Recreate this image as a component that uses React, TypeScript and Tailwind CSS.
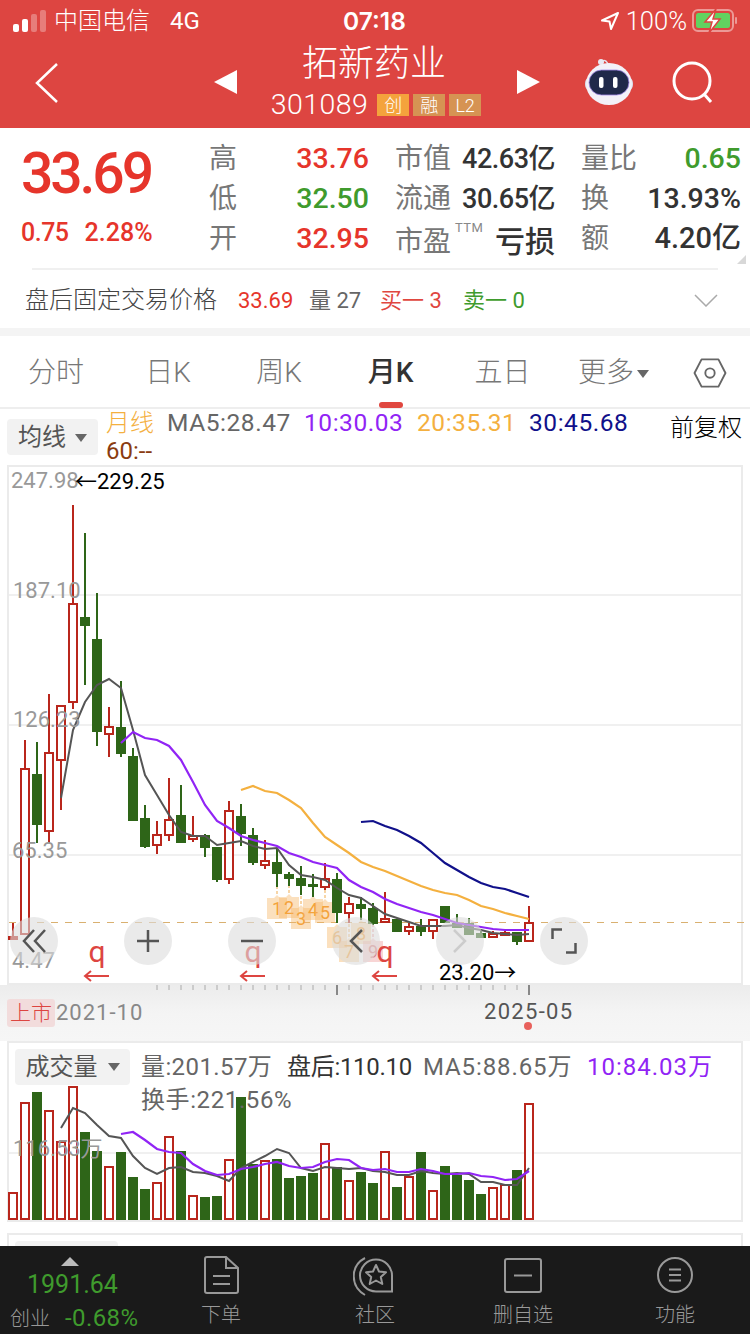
// [high, top, bottom, low, isRed] — page y coordinates, one candle every 12px from x=13
const CANDLES: [number, number, number, number, boolean][] = [
  [923, 937, 939, 940, true], [740, 769, 934, 934, true], [742, 774, 825, 843, false], [694, 753, 831, 843, true],
  [706, 706, 760, 810, true], [505, 604, 702, 709, true], [533, 617, 626, 685, false], [593, 639, 732, 746, false],
  [707, 727, 734, 757, true], [681, 727, 754, 757, false], [748, 756, 821, 821, false], [805, 818, 847, 848, false],
  [821, 835, 845, 854, true], [778, 820, 835, 841, true], [785, 815, 843, 843, false], [816, 836, 839, 842, true],
  [834, 835, 848, 857, false], [847, 847, 880, 882, false], [801, 811, 879, 884, true], [804, 816, 834, 846, false],
  [828, 835, 863, 865, false], [840, 861, 865, 869, true], [848, 862, 874, 887, false], [872, 874, 879, 886, false],
  [866, 878, 886, 895, false], [874, 884, 887, 897, false], [863, 879, 887, 890, true], [873, 879, 913, 923, false],
  [897, 904, 913, 923, true], [897, 904, 909, 920, false], [903, 908, 924, 925, false], [892, 919, 922, 922, true],
  [919, 919, 932, 932, false], [923, 927, 931, 935, true], [919, 926, 932, 936, false], [919, 920, 931, 939, true],
  [906, 906, 923, 923, false], [914, 923, 928, 928, false], [918, 923, 935, 935, false], [931, 933, 938, 938, false],
  [931, 934, 937, 937, true], [931, 933, 935, 935, true], [932, 932, 942, 945, false], [906, 923, 941, 941, true],
];

const MA5 = [798, 730, 702, 685, 679, 688, 730, 775, 795, 815, 832, 836, 836, 845, 843, 841, 846, 849, 848, 865, 875, 877, 880, 888, 895, 898, 906, 914, 918, 922, 926, 926, 926, 925, 928, 930, 933, 934, 935, 934];
const MA10 = [743, 732, 738, 740, 746, 760, 782, 805, 821, 828, 836, 840, 843, 846, 853, 857, 862, 865, 868, 880, 887, 892, 899, 904, 908, 912, 915, 919, 923, 925, 927, 929, 930, 930, 930];
const MA20 = [790, 786, 791, 793, 800, 808, 823, 837, 845, 853, 862, 867, 871, 876, 881, 886, 890, 893, 895, 900, 906, 909, 913, 916, 919];
const MA30 = [822, 821, 826, 830, 836, 843, 853, 863, 870, 877, 883, 887, 889, 893, 897];

const VOLS = [1193, 1103, 1092, 1111, 1142, 1087, 1132, 1151, 1167, 1152, 1177, 1189, 1183, 1137, 1151, 1196, 1197, 1196, 1160, 1097, 1164, 1161, 1159, 1178, 1176, 1173, 1144, 1167, 1181, 1172, 1183, 1152, 1187, 1177, 1152, 1191, 1166, 1175, 1180, 1194, 1188, 1185, 1170, 1104];
const VOL_MA5 = [1128, 1108, 1113, 1125, 1136, 1138, 1156, 1168, 1174, 1168, 1167, 1172, 1173, 1176, 1181, 1168, 1162, 1156, 1149, 1153, 1168, 1171, 1167, 1168, 1169, 1168, 1171, 1172, 1175, 1175, 1171, 1173, 1174, 1173, 1174, 1182, 1182, 1185, 1185, 1168];
const VOL_MA10 = [1134, 1132, 1140, 1149, 1152, 1153, 1164, 1171, 1175, 1174, 1169, 1167, 1164, 1162, 1166, 1168, 1167, 1162, 1159, 1160, 1168, 1170, 1169, 1172, 1172, 1169, 1171, 1174, 1174, 1173, 1176, 1177, 1180, 1179, 1171];

const MARKERS = [
  { n: 1, x: 277, y: 895, pink: false }, { n: 2, x: 289, y: 894, pink: false }, { n: 3, x: 301, y: 905, pink: false },
  { n: 4, x: 313, y: 896, pink: false }, { n: 5, x: 325, y: 899, pink: false }, { n: 6, x: 337, y: 924, pink: false },
  { n: 7, x: 349, y: 938, pink: false }, { n: 8, x: 361, y: 920, pink: false }, { n: 9, x: 373, y: 938, pink: true },
];

const RED_Q = [97, 253, 385];
const TICKS = Array.from({ length: 32 }, (_, i) => 157 + i * 12);

const linePoints = (ys: number[], startX: number) => ys.map((y, i) => `${startX + i * 12},${y}`).join(' ');

function Quote({ label, value, color, valueClass = 'text-[28.5px]' }: { label: string; value: string; color: string; valueClass?: string }) {
  return (
    <div className="w-[160px] flex items-center justify-between">
      <span className="text-[28px] text-[#777]">{label}</span>
      <span className={`${valueClass} font-medium ${color}`}>{value}</span>
    </div>
  );
}

function Circle({ className, children }: { className: string; children: React.ReactNode }) {
  return (
    <div className={`absolute top-[450px] w-12 h-12 rounded-full bg-[#dcdcdc]/60 flex items-center justify-center ${className}`}>
      {children}
    </div>
  );
}

function Robot() {
  return (
    <svg width="52" height="48" viewBox="0 0 52 48">
      <path d="M18 6 C20 2 24 3 25 8" fill="none" stroke="#e6e4f0" strokeWidth="1.5" />
      <circle cx="18" cy="5" r="3" fill="#e9e9f2" />
      <rect x="2" y="20" width="48" height="14" rx="6" fill="#d9d9e6" />
      <ellipse cx="26" cy="27" rx="23" ry="21" fill="#f3f1f8" />
      <rect x="6" y="13" width="40" height="25" rx="12.5" fill="#20294a" stroke="#a58be8" strokeWidth="0.8" />
      <rect x="16" y="20" width="4.5" height="11" rx="2" fill="#fff" />
      <rect x="30" y="20" width="4.5" height="11" rx="2" fill="#fff" />
    </svg>
  );
}

export default function App() {
  return (
    <div className="relative w-[750px] h-[1334px] overflow-hidden bg-white flex flex-col font-['Roboto','Noto_Sans_CJK_SC',sans-serif]">
      {/* Header */}
      <div className="h-[128px] bg-[#dd4541] text-white flex flex-col shrink-0">
        <div className="h-[40px] relative flex items-center pl-[13px] pt-[2px] text-[24px]">
          <div className="flex items-end gap-[3px] h-[22px] mb-[1px]">
            <span className="w-[6px] h-[8px] rounded-[2px] bg-white" />
            <span className="w-[6px] h-[13px] rounded-[2px] bg-white" />
            <span className="w-[6px] h-[18px] rounded-[2px] bg-white/30" />
            <span className="w-[6px] h-[22px] rounded-[2px] bg-white/30" />
          </div>
          <span className="ml-[8px] font-light">中国电信</span>
          <span className="ml-[20px]">4G</span>
          <span className="absolute left-[343px] font-semibold font-['Inter',sans-serif] text-[24.5px]">07:18</span>
          <div className="ml-auto flex items-center mr-[12px]">
            <svg width="20" height="20" viewBox="0 0 20 20" className="mr-[6px]">
              <path d="M18 2 L2 9.5 L9.5 10.5 L11 18 Z" fill="none" stroke="#fff" strokeWidth="2" strokeLinejoin="round" />
            </svg>
            <span className="font-light text-[25.5px] mr-[5px]">100%</span>
            <svg width="46" height="24" viewBox="0 0 46 24">
              <rect x="1" y="1" width="40" height="21" rx="5" fill="none" stroke="#fff" strokeOpacity="0.45" strokeWidth="2" />
              <rect x="43" y="8" width="2" height="7" rx="1" fill="#fff" fillOpacity="0.45" />
              <rect x="4" y="4" width="34" height="15" rx="2.5" fill="#62d260" />
              <path d="M24 0 L13 13 L20 13 L17 24 L28 10 L21 10 Z" fill="#fff" stroke="#dd4541" strokeWidth="1.5" />
            </svg>
          </div>
        </div>
        <div className="flex-1 flex items-start">
          <div className="w-[214px] pl-[35px] pt-[23px] shrink-0">
            <svg width="24" height="40" viewBox="0 0 24 40">
              <path d="M22 1 L2 20 L22 39" fill="none" stroke="#fff" strokeWidth="2.5" />
            </svg>
          </div>
          <div className="w-0 h-0 mt-[30px] border-y-[12.5px] border-y-transparent border-r-[23px] border-r-white shrink-0" />
          <div className="w-[280px] flex flex-col items-center shrink-0">
            <div className="text-[36px] leading-[48px] ml-[-6px] font-light">拓新药业</div>
            <div className="flex items-center h-[28px] mt-[3px] ml-[-2px]">
              <span className="text-[28.5px] font-light tracking-[0.4px] mr-[9px]">301089</span>
              <span className="w-[32px] h-[22px] bg-[#f4a33c] text-[18px] flex items-center justify-center font-light">创</span>
              <span className="w-[32px] h-[22px] ml-[4px] bg-[#d69353] text-[18px] flex items-center justify-center font-light">融</span>
              <span className="w-[32px] h-[22px] ml-[4px] bg-[#d69353] text-[18px] flex items-center justify-center font-light">L2</span>
            </div>
          </div>
          <div className="w-0 h-0 mt-[30px] border-y-[12.5px] border-y-transparent border-l-[23px] border-l-white shrink-0" />
          <div className="ml-[43px] mt-[17px] shrink-0">
            <Robot />
          </div>
          <div className="ml-[37px] mt-[21px] shrink-0">
            <svg width="44" height="44" viewBox="0 0 44 44">
              <circle cx="20" cy="20" r="18" fill="none" stroke="#fff" strokeWidth="3" />
              <path d="M32 33 L39 41" stroke="#fff" strokeWidth="3" />
            </svg>
          </div>
        </div>
      </div>

      {/* Quote block */}
      <div className="relative h-[200px] shrink-0 bg-white">
        <div className="flex h-[140px] pt-[11px]">
          <div className="w-[209px] pl-[21px] shrink-0">
            <div className="text-[57px] leading-[56px] mt-[7px] font-medium text-[#e6352b] tracking-[-3.1px]">33.69</div>
            <div className="mt-[13px] flex gap-[16px] text-[25px] leading-[36px] font-medium text-[#e6352b]">
              <span className="tracking-[-0.5px]">0.75</span>
              <span>2.28%</span>
            </div>
          </div>
          <div className="flex flex-col">
            <div className="flex gap-[26px] h-[40px]">
              <Quote label="高" value="33.76" color="text-[#e6352b]" />
              <Quote label="市值" value="42.63亿" color="text-[#333]" valueClass="text-[27px] tracking-[-0.5px]" />
              <Quote label="量比" value="0.65" color="text-[#3f9b2d]" />
            </div>
            <div className="flex gap-[26px] h-[40px]">
              <Quote label="低" value="32.50" color="text-[#3f9b2d]" />
              <Quote label="流通" value="30.65亿" color="text-[#333]" valueClass="text-[27px] tracking-[-0.5px]" />
              <Quote label="换" value="13.93%" color="text-[#333]" />
            </div>
            <div className="flex gap-[26px] h-[40px]">
              <Quote label="开" value="32.95" color="text-[#e6352b]" />
              <div className="relative">
                <Quote label="市盈" value="亏损" color="text-[#333] font-bold" valueClass="text-[30px]" />
                <span className="absolute left-[60px] top-[-1px] text-[13px] text-[#888] tracking-[0.5px]">TTM</span>
              </div>
              <Quote label="额" value="4.20亿" color="text-[#333]" valueClass="text-[29px]" />
            </div>
          </div>
        </div>
        <div className="absolute right-[4px] top-[127px] w-0 h-0 border-b-[9px] border-b-[#d8d8d8] border-l-[9px] border-l-transparent" />
        <div className="mx-[32px] h-[2px] bg-[#f0f0f0]" />
        <div className="flex items-center h-[60px] pl-[25px] text-[22px]">
          <span className="text-[24px] text-[#444] w-[213px] font-light shrink-0 whitespace-nowrap">盘后固定交易价格</span>
          <span className="text-[#e6352b] w-[71px]">33.69</span>
          <span className="text-[#666] w-[71px]">量 27</span>
          <span className="text-[#e0473f] w-[83px]">买一 3</span>
          <span className="text-[#3f9b2d]">卖一 0</span>
          <svg width="24" height="13" viewBox="0 0 24 13" className="ml-auto mr-[32px]">
            <path d="M1 1 L12 12 L23 1" fill="none" stroke="#aaa" strokeWidth="1.5" />
          </svg>
        </div>
      </div>
      <div className="h-[8px] bg-[#f4f4f4] shrink-0" />

      {/* Tabs */}
      <div className="relative h-[73px] shrink-0 flex items-center pt-[2px] border-b-2 border-[#eeeeee] text-[28px] text-[#777]">
        <span className="w-[112px] text-center font-light">分时</span>
        <span className="w-[112px] text-center font-light">日K</span>
        <span className="w-[110px] text-center font-light">周K</span>
        <span className="w-[113px] text-center font-medium text-[#333]">月K</span>
        <span className="w-[111px] text-center font-light">五日</span>
        <span className="w-[111px] flex items-center justify-center font-light">
          更多
          <span className="ml-[3px] mt-[2px] w-0 h-0 border-x-[6px] border-x-transparent border-t-[8px] border-t-[#666]" />
        </span>
        <svg width="34" height="30" viewBox="0 0 36 32" className="ml-[24px]">
          <path d="M9 1.5 H27 L34.5 16 L27 30.5 H9 L1.5 16 Z" fill="none" stroke="#666" strokeWidth="2" strokeLinejoin="round" />
          <circle cx="18" cy="16" r="5" fill="none" stroke="#666" strokeWidth="2" />
        </svg>
        <span className="absolute left-[379px] bottom-[-1px] w-[24px] h-[6px] rounded-full bg-[#e0473f]" />
      </div>

      {/* Legend */}
      <div className="relative h-[56px] shrink-0 flex text-[24px]">
        <div className="ml-[7px] mt-[10px] w-[91px] h-[36px] rounded-[4px] bg-[#f2f2f2] flex items-center justify-center text-[#555] shrink-0">
          <span>均线</span>
          <span className="ml-[9px] mt-[1px] w-0 h-0 border-x-[6px] border-x-transparent border-t-[8px] border-t-[#666]" />
        </div>
        <div className="ml-[8px] flex flex-col leading-[28px]">
          <div className="flex items-center whitespace-nowrap text-[24.5px] tracking-[0.55px]">
            <span className="text-[#f4b03f] w-[61px] font-light text-[24px] tracking-normal">月线</span>
            <span className="text-[#666] w-[137px]">MA5:28.47</span>
            <span className="text-[#9124f5] w-[113px]">10:30.03</span>
            <span className="text-[#f4b03f] w-[112px]">20:35.31</span>
            <span className="text-[#10108a]">30:45.68</span>
          </div>
          <span className="text-[#8a3c10]">60:--</span>
        </div>
        <span className="absolute right-[8px] top-[1px] text-black font-light">前复权</span>
      </div>

      {/* Candle chart */}
      <div className="relative mx-[7px] h-[520px] shrink-0 border-2 border-[#ebebeb]">
        <svg width="732" height="516" viewBox="9 467 732 516" className="block overflow-visible">
          {[595, 725, 855].map((y) => (
            <line key={y} x1="9" x2="741" y1={y} y2={y} stroke="#f0f0f0" strokeWidth="2" />
          ))}
          <line x1="9" x2="751" y1="922.5" y2="922.5" stroke="#d9b070" strokeWidth="1" strokeDasharray="7 7" />
          {MARKERS.map((m) => (
            <g key={m.n}>
              <line x1={m.x} x2={m.x} y1={m.y - 14} y2={m.y} stroke={m.pink ? '#f0b0b0' : '#f5c78a'} strokeWidth="1.5" strokeDasharray="3 2" />
              <path
                d={`M${m.x - 10} ${m.y + 3} L${m.x - 3} ${m.y + 3} L${m.x} ${m.y} L${m.x + 3} ${m.y + 3} L${m.x + 10} ${m.y + 3} V${m.y + 24} H${m.x - 10} Z`}
                fill={m.pink ? '#ee9a9a' : '#f6b565'}
                fillOpacity="0.42"
              />
              <text x={m.x} y={m.y + 20} textAnchor="middle" fontSize="18" fill={m.pink ? '#d98080' : '#f4a33c'}>
                {m.n}
              </text>
            </g>
          ))}
          {CANDLES.map(([high, top, bottom, low, isRed], i) => {
            const x = 13 + i * 12;
            const color = isRed ? '#b9261c' : '#2e6518';
            return (
              <g key={i}>
                <line x1={x} x2={x} y1={high} y2={top} stroke={color} strokeWidth="2" />
                <line x1={x} x2={x} y1={bottom} y2={low} stroke={color} strokeWidth="2" />
                {isRed ? (
                  <rect x={x - 4} y={top} width="8" height={Math.max(bottom - top, 1)} fill="#fff" stroke={color} strokeWidth="2" />
                ) : (
                  <rect x={x - 5} y={top} width="10" height={bottom - top} fill={color} />
                )}
              </g>
            );
          })}
          <polyline points={linePoints(MA5, 61)} fill="none" stroke="#555" strokeWidth="2" />
          <polyline points={linePoints(MA10, 121)} fill="none" stroke="#9124f5" strokeWidth="2.2" />
          <polyline points={linePoints(MA20, 241)} fill="none" stroke="#f4b03f" strokeWidth="2.2" />
          <polyline points={linePoints(MA30, 361)} fill="none" stroke="#10108a" strokeWidth="2.2" />
          {RED_Q.map((x) => (
            <g key={x} stroke="#dd4541" strokeWidth="2" fill="none">
              <path d={`M${x + 12} 976 H${x - 12}`} />
              <path d={`M${x - 6} 971 L${x - 12} 976 L${x - 6} 981`} />
            </g>
          ))}
        </svg>

        {/* Axis labels */}
        <span className="absolute left-[2px] top-[1px] text-[22px] leading-[26px] text-[#999]">247.98</span>
        <span className="absolute left-[4px] top-[111px] text-[22px] leading-[26px] text-[#999]">187.10</span>
        <span className="absolute left-[4px] top-[240px] text-[22px] leading-[26px] text-[#999]">126.23</span>
        <span className="absolute left-[3px] top-[371px] text-[22px] leading-[26px] text-[#999]">65.35</span>
        <span className="absolute left-[3px] top-[481px] text-[22px] leading-[26px] text-[#999]">4.47</span>
        <span className="absolute left-[66px] top-[2px] text-[22px] leading-[26px] text-black whitespace-nowrap">←229.25</span>
        <span className="absolute left-[430px] top-[493px] text-[22px] leading-[26px] text-black whitespace-nowrap">23.20→</span>

        {RED_Q.map((x) => (
          <span
            key={x}
            className="absolute top-[468px] text-[30px] leading-[34px] text-[#dd4541] -translate-x-1/2"
            style={{ left: x - 9 }}
          >
            q
          </span>
        ))}

        {/* Chart controls */}
        <Circle className="left-[1px]">
          <svg width="24" height="24" viewBox="0 0 24 24" fill="none" stroke="#555" strokeWidth="2.5">
            <path d="M12 1 L2 12 L12 23" />
            <path d="M23 1 L13 12 L23 23" />
          </svg>
        </Circle>
        <Circle className="left-[115px]">
          <svg width="22" height="22" viewBox="0 0 22 22" stroke="#555" strokeWidth="2.5">
            <path d="M0 11 H22 M11 0 V22" />
          </svg>
        </Circle>
        <Circle className="left-[219px]">
          <svg width="22" height="22" viewBox="0 0 22 22" stroke="#555" strokeWidth="2.5">
            <path d="M0 11 H22" />
          </svg>
        </Circle>
        <Circle className="left-[323px]">
          <svg width="14" height="24" viewBox="0 0 14 24" fill="none" stroke="#555" strokeWidth="2.5">
            <path d="M13 1 L2 12 L13 23" />
          </svg>
        </Circle>
        <Circle className="left-[427px]">
          <svg width="14" height="24" viewBox="0 0 14 24" fill="none" stroke="#ccc" strokeWidth="2.5">
            <path d="M1 1 L12 12 L1 23" />
          </svg>
        </Circle>
        <Circle className="left-[531px]">
          <svg width="26" height="26" viewBox="0 0 26 26" fill="none" stroke="#555" strokeWidth="2.5">
            <path d="M1.5 11 V1.5 H11" />
            <path d="M24.5 15 V24.5 H15" />
          </svg>
        </Circle>
      </div>

      {/* Date strip */}
      <div className="relative h-[56px] shrink-0 bg-gradient-to-b from-[#ececec] via-[#f4f4f4] to-[#f6f6f6]">
        <svg width="750" height="12" viewBox="0 985 750 12" className="block">
          {TICKS.map((x) => (
            <line key={x} x1={x} x2={x} y1="985" y2={x === 337 || x === 529 ? 995 : 990} stroke={x === 337 || x === 529 ? '#888' : '#aaa'} strokeWidth={x === 337 || x === 529 ? 2 : 1} />
          ))}
        </svg>
        <div className="absolute left-[7px] top-[14px] flex items-center text-[22px] leading-[28px]">
          <span className="w-[48px] h-[28px] rounded-[3px] bg-[#f2dcdc] text-[#dd4541] flex items-center justify-center text-[21px] font-light">上市</span>
          <span className="ml-[1px] text-[#888] tracking-[1px]">2021-10</span>
        </div>
        <span className="absolute left-[484px] top-[13px] text-[22px] leading-[28px] text-[#555] tracking-[1.3px]">2025-05</span>
        <span className="absolute left-[524px] top-[37px] w-2 h-2 rounded-full bg-[#e8615c]" />
      </div>

      {/* Volume chart */}
      <div className="relative mx-[7px] h-[181px] shrink-0 border-2 border-[#ebebeb]">
        <svg width="732" height="177" viewBox="9 1043 732 177" className="block overflow-visible">
          <line x1="9" x2="741" y1="1153" y2="1153" stroke="#f0f0f0" strokeWidth="2" />
          {VOLS.map((top, i) => {
            const x = 13 + i * 12;
            return CANDLES[i][4] ? (
              <rect key={i} x={x - 4} y={top} width="8" height={1219 - top} fill="#fff" stroke="#b9261c" strokeWidth="2" />
            ) : (
              <rect key={i} x={x - 5} y={top} width="10" height={1220 - top} fill="#2e6518" />
            );
          })}
          <polyline points={linePoints(VOL_MA5, 61)} fill="none" stroke="#555" strokeWidth="2" />
          <polyline points={linePoints(VOL_MA10, 121)} fill="none" stroke="#9124f5" strokeWidth="2.2" />
        </svg>
        <div className="absolute left-[6px] top-[6px] w-[115px] h-[36px] rounded-[4px] bg-[#f2f2f2] flex items-center justify-center text-[24px] text-[#555]">
          <span>成交量</span>
          <span className="ml-[10px] w-0 h-0 border-x-[6px] border-x-transparent border-t-[8px] border-t-[#666]" />
        </div>
        <div className="absolute left-[132px] top-[9px] flex items-center text-[24px] leading-[30px] whitespace-nowrap">
          <span className="text-[#666] w-[146px] tracking-[0.4px]">量:201.57万</span>
          <span className="text-[#333] w-[136px] tracking-[-0.3px]">盘后:110.10</span>
          <span className="text-[#666] w-[164px] tracking-[0.9px]">MA5:88.65万</span>
          <span className="text-[#9124f5] tracking-[1px]">10:84.03万</span>
        </div>
        <span className="absolute left-[132px] top-[42px] text-[24px] leading-[30px] text-[#666] tracking-[0.6px]">换手:221.56%</span>
        <span className="absolute left-[4px] top-[93px] text-[22px] leading-[26px] text-[#999]">116.53万</span>
      </div>

      {/* Next indicator panel, cut off by the bottom bar */}
      <div className="h-[11px] shrink-0" />
      <div className="mx-[7px] h-[13px] shrink-0 border-2 border-b-0 border-[#ebebeb] overflow-hidden">
        <div className="ml-[6px] mt-[6px] w-[103px] h-[36px] rounded-[4px] bg-[#f2f2f2]" />
      </div>

      {/* Bottom bar */}
      <div className="h-[88px] shrink-0 bg-[#1a1a1a] flex text-[20px] text-[#999]">
        <div className="w-[142px] shrink-0 relative">
          <span className="absolute left-[61px] top-[11px] w-0 h-0 border-x-[9px] border-x-transparent border-b-[9px] border-b-[#bbb]" />
          <span className="absolute left-[27px] top-[23px] text-[25px] leading-[32px] text-[#3f9b2d]">1991.64</span>
          <span className="absolute left-[10px] top-[59px] leading-[28px] font-light">创业</span>
          <span className="absolute left-[65px] top-[57px] text-[24px] leading-[30px] text-[#3f9b2d] whitespace-nowrap tracking-[0.4px]">-0.68%</span>
        </div>
        <div className="w-[158px] flex flex-col items-center pt-[10px]">
          <svg width="36" height="38" viewBox="0 0 36 38" fill="none" stroke="#999" strokeWidth="2">
            <path d="M2 3 Q2 1 4 1 H23 L35 12 V35 Q35 37 33 37 H4 Q2 37 2 35 Z" />
            <path d="M23 1 V12 H35" />
            <path d="M10 20 H27 M10 28 H27" />
          </svg>
          <span className="mt-[7px] leading-[28px] font-light">下单</span>
        </div>
        <div className="w-[150px] flex flex-col items-center pt-[10px]">
          <svg width="44" height="40" viewBox="0 0 44 40" fill="none" stroke="#999" strokeWidth="2">
            <path d="M12 2 C-3 10 -3 30 12 39" />
            <path d="M23 3.5 A16 16 0 0 1 39 19.5 V35.5 H23 A16 16 0 0 1 23 3.5 Z" />
            <path d="M23 9 L26 15.5 L33 16.3 L27.8 21 L29.3 28 L23 24.5 L16.7 28 L18.2 21 L13 16.3 L20 15.5 Z" strokeLinejoin="round" />
          </svg>
          <span className="mt-[5px] leading-[28px] font-light">社区</span>
        </div>
        <div className="w-[146px] flex flex-col items-center pt-[12px]">
          <svg width="38" height="35" viewBox="0 0 38 35" fill="none" stroke="#999" strokeWidth="2">
            <rect x="1" y="1" width="36" height="33" rx="2" />
            <path d="M10 17.5 H28" />
          </svg>
          <span className="mt-[8px] leading-[28px] font-light">删自选</span>
        </div>
        <div className="flex-1 flex flex-col items-center pt-[11px] pl-[4px]">
          <svg width="36" height="36" viewBox="0 0 36 36" fill="none" stroke="#999" strokeWidth="2">
            <circle cx="18" cy="18" r="17" />
            <path d="M12 12.5 H24 M12 18 H24 M12 23.5 H24" />
          </svg>
          <span className="mt-[8px] leading-[28px] font-light">功能</span>
        </div>
      </div>
    </div>
  );
}
